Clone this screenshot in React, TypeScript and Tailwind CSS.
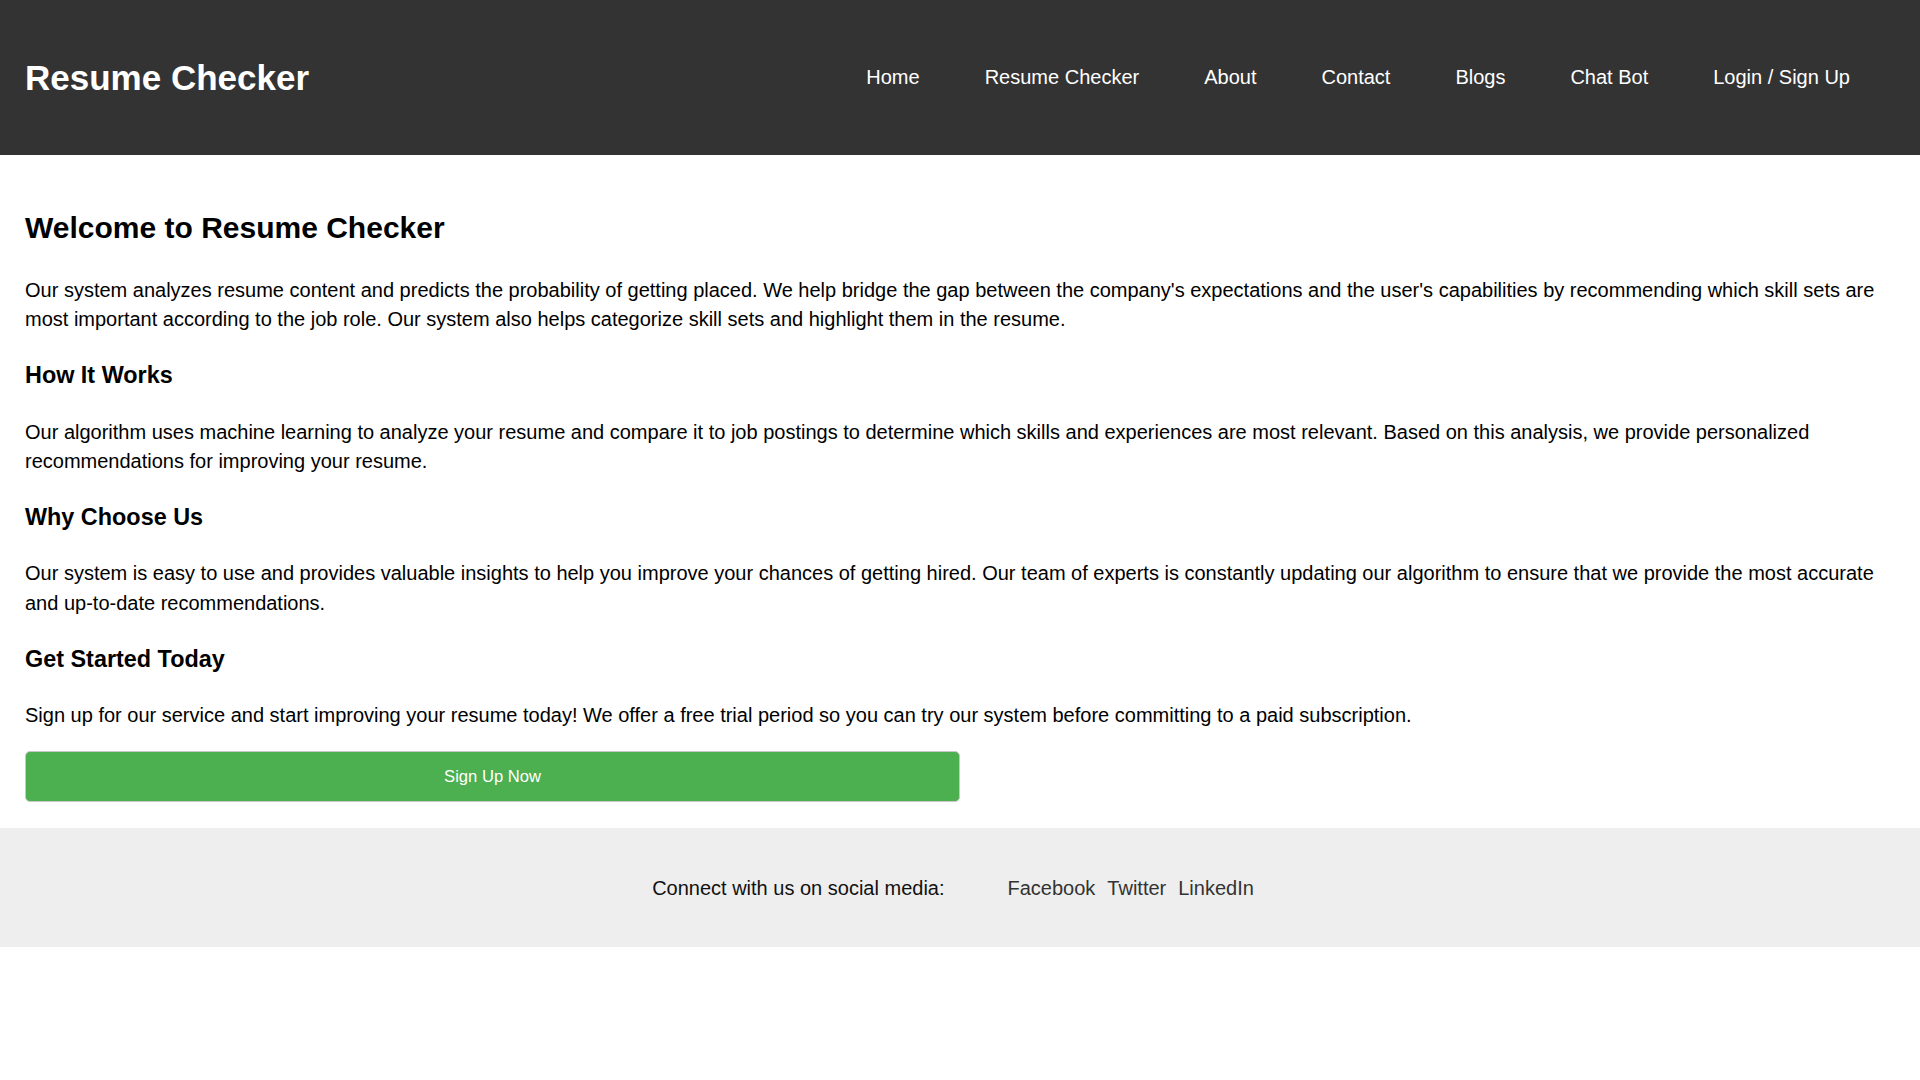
const navLinks = ["Home", "Resume Checker", "About", "Contact", "Blogs", "Chat Bot", "Login / Sign Up"];

const sections = [
  {
    title: "How It Works",
    body: "Our algorithm uses machine learning to analyze your resume and compare it to job postings to determine which skills and experiences are most relevant. Based on this analysis, we provide personalized recommendations for improving your resume.",
  },
  {
    title: "Why Choose Us",
    body: "Our system is easy to use and provides valuable insights to help you improve your chances of getting hired. Our team of experts is constantly updating our algorithm to ensure that we provide the most accurate and up-to-date recommendations.",
  },
  {
    title: "Get Started Today",
    body: "Sign up for our service and start improving your resume today! We offer a free trial period so you can try our system before committing to a paid subscription.",
  },
];

export default function App() {
  return (
    <div className="min-h-screen bg-white text-black font-['Liberation_Sans',Arial,sans-serif] text-[20px] leading-[1.47]">
      {/* Header */}
      <header className="h-[155px] bg-[#333333] flex items-center justify-between pl-[25px] pr-[70px]">
        <h1 className="text-[35px] font-bold text-white leading-none">Resume Checker</h1>
        <nav className="flex items-center gap-[65px] pt-[1px]">
          {navLinks.map((link) => (
            <a key={link} href="#" className="text-white text-[20px]">
              {link}
            </a>
          ))}
        </nav>
      </header>

      {/* Main */}
      <main className="px-[25px] pt-[26px] pb-[26px]">
        <h2 className="text-[30px] font-bold mt-[25px] mb-[26px] leading-[1.47]">Welcome to Resume Checker</h2>
        <p className="my-[20px]">
          Our system analyzes resume content and predicts the probability of getting placed. We help bridge the gap
          between the company's expectations and the user's capabilities by recommending which skill sets are most
          important according to the job role. Our system also helps categorize skill sets and highlight them in the
          resume.
        </p>
        {sections.map((s) => (
          <div key={s.title}>
            <h3 className="text-[23.4px] font-bold leading-[1.47] mt-[23.5px] mb-[25px]">{s.title}</h3>
            <p className="my-[20px]">{s.body}</p>
          </div>
        ))}
        <button className="block w-1/2 mt-[19px] py-[15px] bg-[#4CAF50] text-white text-[16.6px] leading-[1.15] border border-[#c8c8c8] rounded-[5px]">
          Sign Up Now
        </button>
      </main>

      {/* Footer */}
      <footer className="bg-[#eeeeee] pt-[26px] pb-[24px]">
        <p className="my-[20px] flex justify-center items-center pr-[14px]">
          <span className="text-[#111111] mr-[63px]">Connect with us on social media:</span>
          <span className="flex gap-[12px]">
            <a href="#" className="text-[#333333]">Facebook</a>
            <a href="#" className="text-[#333333]">Twitter</a>
            <a href="#" className="text-[#333333]">LinkedIn</a>
          </span>
        </p>
      </footer>
    </div>
  );
}
